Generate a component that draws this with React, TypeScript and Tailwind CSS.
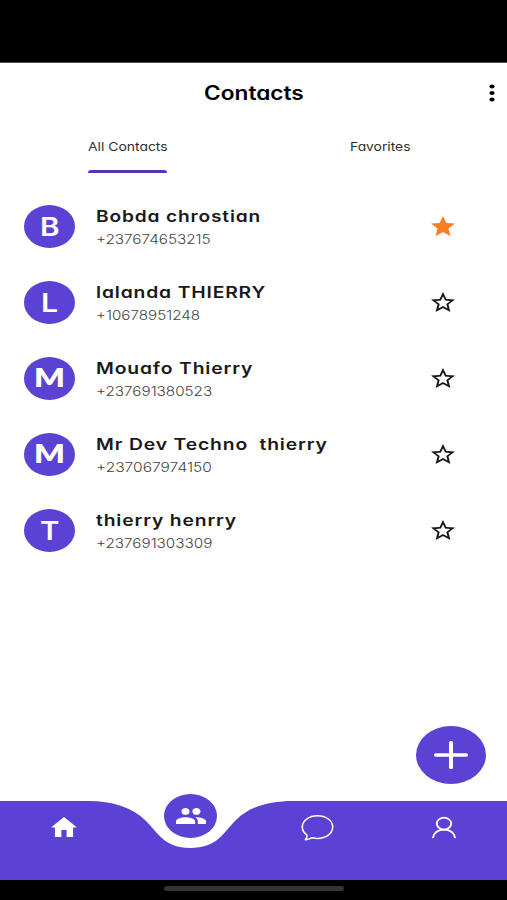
import { useLayoutEffect, useRef, useState } from "react";
import clsx from "clsx";

const contacts = [
  { name: "Bobda chrostian", width: 165, phone: "+237674653215", phoneWidth: 115, initial: "B", initialWidth: 19, favorite: true },
  { name: "lalanda THIERRY", width: 170, phone: "+10678951248", phoneWidth: 104, initial: "L", initialWidth: 17, favorite: false },
  { name: "Mouafo Thierry", width: 157, phone: "+237691380523", phoneWidth: 116, initial: "M", initialWidth: 31, favorite: false },
  { name: "Mr Dev Techno  thierry", width: 232, phone: "+237067974150", phoneWidth: 116, initial: "M", initialWidth: 31, favorite: false },
  { name: "thierry henrry", width: 141, phone: "+237691303309", phoneWidth: 116, initial: "T", initialWidth: 20, favorite: false },
];

/** Wide lettering: stretches a line of text to the given width. */
function WideText({ text, width, className }: { text: string; width: number; className?: string }) {
  const ref = useRef<HTMLSpanElement>(null);
  const [scale, setScale] = useState(1);
  useLayoutEffect(() => {
    const fit = () => {
      if (ref.current) setScale(width / ref.current.offsetWidth);
    };
    fit();
    document.fonts.ready.then(fit);
  }, [width, text]);
  return (
    <span className={clsx("block", className)} style={{ width }}>
      <span
        ref={ref}
        className="inline-block origin-left whitespace-pre align-top"
        style={{ transform: `scaleX(${scale})` }}
      >
        {text}
      </span>
    </span>
  );
}

function Star({ filled }: { filled: boolean }) {
  return (
    <svg
      viewBox="2 2 20 19"
      preserveAspectRatio="none"
      className={clsx("mt-[28px] h-[20px] w-[24px]", filled ? "text-[#f97d25]" : "text-[#151515]")}
      fill="currentColor"
    >
      {filled ? (
        <path d="M12 17.27 18.18 21l-1.64-7.03L22 9.24l-7.19-.61L12 2 9.19 8.63 2 9.24l5.46 4.73L5.82 21z" />
      ) : (
        <path d="m22 9.24-7.19-.62L12 2 9.19 8.63 2 9.24l5.46 4.73L5.82 21 12 17.27 18.18 21l-1.63-7.03zM12 15.4l-3.76 2.27 1-4.28-3.32-2.88 4.38-.38L12 6.1l1.71 4.04 4.38.38-3.32 2.88 1 4.28z" />
      )}
    </svg>
  );
}

export default function App() {
  return (
    <div className="flex h-[900px] w-[507px] flex-col overflow-hidden bg-white font-['Inter','Liberation_Sans',sans-serif] [font-feature-settings:'cv11']">
      <div className="h-[63px] shrink-0 border-b border-[#555] bg-black" />

      <header className="flex h-[60px] shrink-0 items-center pl-[204px]">
        <WideText text="Contacts" width={100} className="text-[19.5px] leading-[60px] font-semibold text-black" />
        <svg viewBox="0 0 6 18" preserveAspectRatio="none" className="ml-[184.5px] h-[18px] w-[6px]">
          <ellipse cx="3" cy="2.5" rx="2.6" ry="2.1" />
          <ellipse cx="3" cy="9" rx="2.6" ry="2.1" />
          <ellipse cx="3" cy="15.5" rx="2.6" ry="2.1" />
        </svg>
      </header>

      <nav className="flex h-[65px] shrink-0 pt-[12px] pl-[88px]">
        <div>
          <WideText text="All Contacts" width={80} className="text-[12px] leading-6 text-[#303030]" />
          <div className="mt-[11px] h-[3px] w-[79px] rounded-t-[3px] bg-[#5b32b4]" />
        </div>
        <WideText text="Favorites" width={60} className="ml-[182px] text-[12px] leading-6 text-[#303030]" />
      </nav>

      <main className="flex h-[613px] shrink-0 flex-col">
        {contacts.map((c) => (
          <div key={c.phone} className="flex h-[76px] shrink-0 pl-[24px]">
            <div className="mt-[17px] flex h-[43px] w-[51px] items-center justify-center rounded-[50%] bg-[#5b42d5]">
              <WideText
                text={c.initial}
                width={c.initialWidth}
                className={clsx(
                  "text-white",
                  c.initial === "M"
                    ? "pb-[2px] font-[Lato] text-[26px] leading-[41px] font-extrabold"
                    : "pt-px text-[25px] leading-[43px] font-semibold",
                )}
              />
            </div>
            <div className="ml-[21px] w-[335px] pt-[17px]">
              <WideText text={c.name} width={c.width} className="text-[16px] leading-[23px] font-semibold tracking-[0.7px] text-[#1a1a1a]" />
              <WideText text={c.phone} width={c.phoneWidth} className="text-[13px] leading-[22px] font-light text-[#444]" />
            </div>
            <Star filled={c.favorite} />
          </div>
        ))}
        <button className="mt-[158px] ml-[416px] flex h-[58px] w-[70px] shrink-0 items-center justify-center rounded-[50%] bg-[#5b42d5]">
          <svg viewBox="0 0 34 28" className="h-[28px] w-[34px]" stroke="#fff" strokeLinecap="round">
            <path d="M17 1.8v24.4" strokeWidth="4" />
            <path d="M1.7 14h30.6" strokeWidth="3.4" />
          </svg>
        </button>
      </main>

      <footer className="relative h-[79px] shrink-0">
        <svg viewBox="0 0 507 79" className="absolute inset-0 h-[79px] w-[507px]" fill="#5b42d5">
          <path d="M0 0H88C113 0 133 7 145 19C159 33 165 47 190 47C217 47 222 33 236 19C248 7 266 0 294 0H507V79H0Z" />
        </svg>
        <div className="relative flex">
          <svg viewBox="2 3 20 17" preserveAspectRatio="none" className="mt-[16px] ml-[51px] h-[20px] w-[26px]" fill="#fff">
            <path d="M10 20v-6h4v6h5v-8h3L12 3 2 12h3v8z" />
          </svg>
          <div className="-mt-[7px] ml-[87px] flex h-[44px] w-[53px] items-center justify-center rounded-[50%] bg-[#5b42d5]">
            <svg viewBox="1 5 22 14" preserveAspectRatio="none" className="h-[16px] w-[30px]" fill="#fff">
              <path d="M16 11c1.66 0 2.99-1.34 2.99-3S17.66 5 16 5s-3 1.34-3 3 1.34 3 3 3m-8 0c1.66 0 2.99-1.34 2.99-3S9.66 5 8 5 5 6.34 5 8s1.34 3 3 3m0 2c-2.33 0-7 1.17-7 3.5V19h14v-2.5c0-2.33-4.67-3.5-7-3.5m8 0c-.29 0-.62.02-.97.05 1.16.84 1.97 1.97 1.97 3.45V19h6v-2.5c0-2.33-4.67-3.5-7-3.5" />
            </svg>
          </div>
          <svg viewBox="0 0 34 27" className="mt-[13px] ml-[82.5px] h-[27px] w-[34px]" fill="none" stroke="#fff" strokeWidth="1.5" strokeLinejoin="round">
            <path d="M17.5 1.8C9 1.8 2.3 6.7 2.3 13c0 3.2 1.7 6 4.7 8 .3 2-.6 3.6-1.7 4.7 2.8.1 4.8-.8 6.5-2 1.8.4 3.7.7 5.7.7 8.5 0 15.2-5 15.2-11.400S26 1.8 17.500 1.800Z" />
          </svg>
          <svg viewBox="0 0 26 23" className="mt-[15px] ml-[97px] h-[23px] w-[26px]" fill="none" stroke="#fff" strokeWidth="1.9" strokeLinecap="round">
            <ellipse cx="13" cy="7.6" rx="7.2" ry="6" />
            <path d="M2.1 21.3C2.9 17 7 13.6 13 13.6s10.100 3.400 10.900 7.700" />
          </svg>
        </div>
      </footer>

      <div className="flex h-[20px] shrink-0 justify-center bg-black pt-[6px]">
        <div className="h-[5px] w-[180px] rounded-full bg-[#343434]" />
      </div>
    </div>
  );
}
